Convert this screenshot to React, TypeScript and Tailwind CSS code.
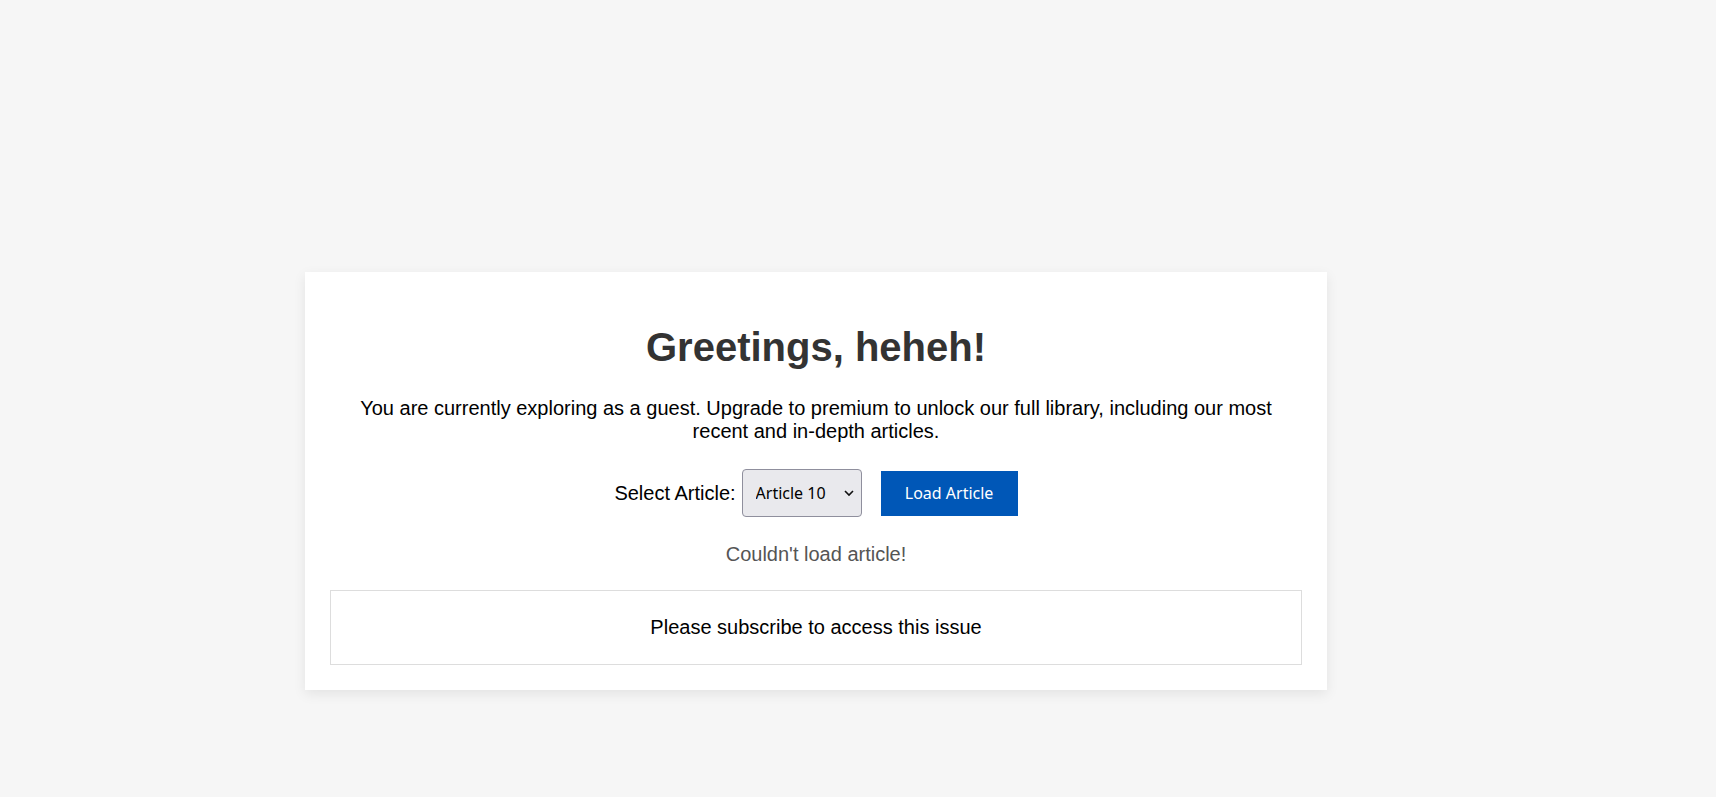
import React from "react";

export default function App() {
  return (
    <div
      className="min-h-[797px] w-full bg-[#f6f6f6] pt-[272px] pl-[305px]"
      style={{ fontFamily: '"Liberation Sans", Arial, sans-serif' }}
    >
      <div className="w-[1022px] bg-white p-[25px] text-center shadow-[0_4px_12px_rgba(0,0,0,0.08)]">
        <h1 className="mt-[27px] mb-[27px] text-[40px] font-bold leading-[46px] text-[#333]">
          Greetings, heheh!
        </h1>
        <p className="text-[20px] leading-[23px] text-black">
          You are currently exploring as a guest. Upgrade to premium to unlock our full library, including our most
          recent and in-depth articles.
        </p>
        <div className="mt-[26px] flex items-center justify-center">
          <label className="text-[20px] leading-[23px] text-black">Select Article:</label>
          <div className="relative ml-[6px]">
            <select
              defaultValue="10"
              className="h-[48px] w-[120px] appearance-none rounded-[4px] border border-[#8f8f9d] bg-[#e9e9ed] pl-[13px] text-[16px] text-black outline-none"
              style={{ fontFamily: '"Noto Sans", "Open Sans", sans-serif' }}
            >
              {Array.from({ length: 10 }, (_, i) => (
                <option key={i + 1} value={String(i + 1)}>
                  Article {i + 1}
                </option>
              ))}
            </select>
            <svg
              className="pointer-events-none absolute right-[8px] top-1/2 -translate-y-1/2"
              width="10"
              height="7"
              viewBox="0 0 10 7"
              fill="none"
            >
              <path d="M1 1.5 L5 5.5 L9 1.5" stroke="#111" strokeWidth="1.6" />
            </svg>
          </div>
          <button
            className="ml-[19px] h-[45px] w-[137px] bg-[#0057b7] text-[16px] text-white"
            style={{ fontFamily: '"Noto Sans", "Open Sans", sans-serif' }}
          >
            Load Article
          </button>
        </div>
        <p className="mt-[26px] text-[20px] leading-[23px] text-[#555]">Couldn't load article!</p>
        <div className="mt-[24px] border border-[#ddd] py-[25px] text-[20px] leading-[23px] text-black">
          Please subscribe to access this issue
        </div>
      </div>
    </div>
  );
}
